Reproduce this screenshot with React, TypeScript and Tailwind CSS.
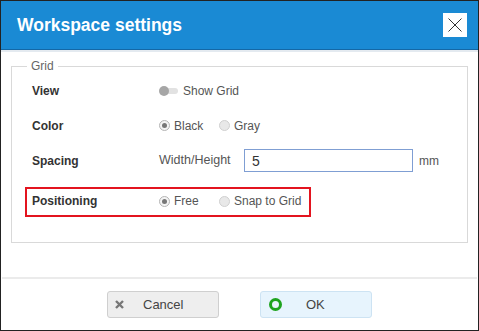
import React, { useState } from "react";

function Radio({ checked }: { checked?: boolean }) {
  return (
    <span
      className={`flex size-[11px] shrink-0 items-center justify-center rounded-full border ${
        checked ? "border-[#b5b5b5] bg-[#f4f4f4]" : "border-[#d0d0d0] bg-[#e8e8e8]"
      }`}
    >
      {checked && <span className="size-[5px] rounded-full bg-[#777]" />}
    </span>
  );
}

function RadioOption({ label, checked, first }: { label: string; checked?: boolean; first?: boolean }) {
  return (
    <label
      className={`flex items-center gap-[4px] whitespace-nowrap text-[12px] text-[#555] ${
        first ? "w-[60px]" : ""
      }`}
    >
      <Radio checked={checked} />
      <span>{label}</span>
    </label>
  );
}

function Row({ label, children }: { label: string; children: React.ReactNode }) {
  return (
    <div className="flex h-[35px] items-center pl-[20px]">
      <span className="w-[127px] text-[12px] font-bold text-[#333]">{label}</span>
      <div className="flex items-center">{children}</div>
    </div>
  );
}

function App() {
  const [spacing, setSpacing] = useState("5");

  return (
    <div className="flex h-[331px] w-[479px] flex-col border border-[#222] bg-white font-['Liberation_Sans',Arial,sans-serif]">
      <div className="flex h-[48px] items-center justify-between bg-[#1a8ad4] pl-[16px] pr-[11px]">
        <h1 className="text-[17.5px] font-bold text-white">Workspace settings</h1>
        <button className="flex size-[24px] items-center justify-center bg-white">
          <svg width="14" height="14" viewBox="0 0 14 14">
            <path d="M0.5 0.5L13.5 13.5M13.5 0.5L0.5 13.5" stroke="#333" strokeWidth="1" />
          </svg>
        </button>
      </div>
      <div className="h-px bg-[#1468a6]" />
      <div className="h-[2px] bg-[#e4eaf0]" />

      <div className="px-[10px] pt-[7px]">
        <fieldset className="border border-[#d9d9d9] pb-[25px]">
          <legend className="ml-[15px] px-[4px] text-[12px] leading-[14px] text-[#666]">Grid</legend>

          <Row label="View">
            <span className="relative mr-[4px] flex h-[10px] w-[20px] items-center">
              <span className="absolute left-[3px] h-[6px] w-[16px] rounded-full bg-[#e2e2e2]" />
              <span className="absolute left-0 size-[10px] rounded-full bg-[#a6a6a6]" />
            </span>
            <span className="text-[12px] text-[#555]">Show Grid</span>
          </Row>

          <Row label="Color">
            <RadioOption label="Black" checked first />
            <RadioOption label="Gray" />
          </Row>

          <Row label="Spacing">
            <span className="w-[85px] text-[12.5px] text-[#555]">Width/Height</span>
            <input
              value={spacing}
              onChange={(e) => setSpacing(e.target.value)}
              className="h-[23px] w-[169px] border border-[#7f9ed3] px-[7px] text-[14px] text-[#333] outline-none"
            />
            <span className="ml-[6px] text-[12px] text-[#555]">mm</span>
          </Row>

          <div className="ml-[13px] mt-[9px] flex h-[30px] w-[286px] items-center border-2 border-[#e3141f] pb-[2px] pl-[5px]">
            <span className="w-[127px] text-[12px] font-bold text-[#333]">Positioning</span>
            <RadioOption label="Free" checked first />
            <RadioOption label="Snap to Grid" />
          </div>
        </fieldset>
      </div>

      <div className="mx-px mt-[34px] h-[2px] bg-[#ebebeb]" />

      <div className="mt-[12px] flex justify-center gap-[41px]">
        <button className="flex h-[27px] w-[112px] items-center rounded-[3px] border border-[#cfcfcf] bg-[#eeeeee] pl-[7px] text-[13px] text-[#444]">
          <svg width="9" height="9" viewBox="0 0 9 9">
            <path d="M1 1L8 8M8 1L1 8" stroke="#777" strokeWidth="2.4" />
          </svg>
          <span className="ml-[19px]">Cancel</span>
        </button>
        <button className="flex h-[27px] w-[112px] items-center rounded-[3px] border border-[#cde3f3] bg-[#e7f4fd] pl-[8px] text-[13px] text-[#444]">
          <span className="size-[13px] rounded-full border-[3px] border-[#1ea31e]" />
          <span className="ml-[24px]">OK</span>
        </button>
      </div>
    </div>
  );
}

export default App;
